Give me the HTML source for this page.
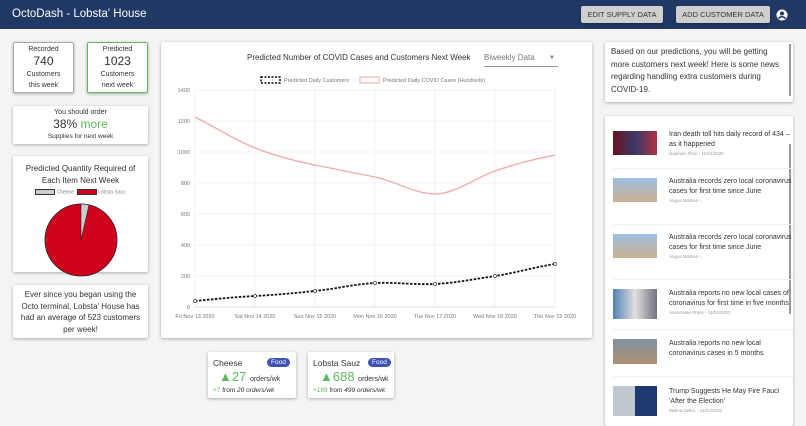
<!DOCTYPE html>
<html><head><meta charset="utf-8"><style>
*{box-sizing:border-box;margin:0;padding:0}
body{width:806px;height:418px;overflow:hidden;background:#f4f4f4;font-family:"Liberation Sans",sans-serif;color:#333;position:relative}
.nav{position:absolute;left:0;top:0;width:806px;height:29px;background:#203864;color:#fff}
.nav .t{position:absolute;left:12px;top:8px;font-size:11.5px}
.btn{position:absolute;top:6px;height:17px;background:#cfcfcf;color:#333;font-size:7.5px;border-radius:2px;text-align:center;line-height:17px;box-shadow:0 1px 2px rgba(0,0,0,.3)}
.card{position:absolute;background:#fff;box-shadow:0 1px 3px rgba(0,0,0,.3);border-radius:2px}
.c{text-align:center}
.sm{font-size:7px}
.news .it{position:absolute;left:8px;width:180px;height:56px;border-top:1px solid #f0f0f0}
.news .im{position:absolute;left:0;width:44px;height:24px}
.news .tx{position:absolute;left:56px;font-size:7px;line-height:9.5px;color:#333;width:126px}
.news .m{font-size:4.5px;color:#999}
.food{font-size:8px}
.pill{position:absolute;background:#3f51b5;color:#fff;border-radius:6px;font-size:6.5px;padding:1px 4px}
</style></head><body>
<div class="nav"><div class="t">OctoDash - Lobsta' House</div>
<div class="btn" style="left:581px;width:82px">EDIT SUPPLY DATA</div>
<div class="btn" style="left:676px;width:94px">ADD CUSTOMER DATA</div>
<svg style="position:absolute;left:776px;top:9px" width="12" height="12" viewBox="0 0 12 12"><circle cx="6" cy="6" r="5.5" fill="#fff"/><circle cx="6" cy="4.5" r="2" fill="#203864"/><path d="M2.5 9.5Q6 6 9.5 9.5" stroke="#203864" stroke-width="1.6" fill="none"/></svg>
</div>

<div class="card c" style="left:13px;top:42px;width:61px;height:51px;border:1px solid #aaa">
<div class="sm" style="margin-top:3px">Recorded</div><div style="font-size:12px;margin-top:1px;line-height:14px">740</div><div class="sm" style="margin-top:1px;line-height:11px">Customers<br>this week</div></div>
<div class="card c" style="left:87px;top:42px;width:61px;height:51px;border:1px solid #5cb85c">
<div class="sm" style="margin-top:3px">Predicted</div><div style="font-size:12px;margin-top:1px;line-height:14px">1023</div><div class="sm" style="margin-top:1px;line-height:11px">Customers<br>next week</div></div>

<div class="card c" style="left:13px;top:106px;width:135px;height:38px">
<div style="font-size:7px;margin-top:3px">You should order</div><div style="font-size:12px;margin-top:1px">38% <span style="color:#5cb85c">more</span></div><div style="font-size:6.5px;margin-top:2px">Supplies for next week</div></div>

<div class="card c" style="left:13px;top:156px;width:135px;height:116px">
<div style="font-size:8px;line-height:12px;margin-top:7px">Predicted Quantity Required of<br>Each Item Next Week</div>
<div style="font-size:5px;color:#888;margin-top:2px"><span style="display:inline-block;width:20px;height:6px;background:#ccc;border:1px solid #333;vertical-align:middle"></span> Cheese &nbsp;<span style="display:inline-block;width:20px;height:6px;background:#d0021b;border:1px solid #333;vertical-align:middle"></span> Lobsta Sauz</div>
<svg style="position:absolute;left:30px;top:46px" width="76" height="76" viewBox="0 0 76 76"><circle cx="38" cy="38" r="36" fill="#d0021b" stroke="#222" stroke-width="0.8"/><path d="M38 38L38 2A36 36 0 0 1 46 3Z" fill="#ccc" stroke="#222" stroke-width="0.6"/></svg>
</div>

<div class="card c" style="left:13px;top:285px;width:135px;height:53px;font-size:8px;line-height:11.5px;padding:4px 6px 0">Ever since you began using the Octo terminal, Lobsta' House has had an average of 523 customers per week!</div>

<div class="card" style="left:161px;top:42px;width:431px;height:296px">
<div style="position:absolute;left:86px;top:11px;font-size:8px">Predicted Number of COVID Cases and Customers Next Week</div>
<div style="position:absolute;left:323px;top:11px;width:74px;height:14px;border-bottom:1px solid #999;font-size:8px;color:#777">Biweekly Data<span style="position:absolute;right:3px;font-size:6px;top:2px">▼</span></div>
</div>
<svg style="position:absolute;left:161px;top:42px" width="431" height="296" viewBox="161 42 431 296" font-family="Liberation Sans" font-size="5.5" fill="#777">
<rect x="261" y="77" width="19" height="6" fill="none" stroke="#000" stroke-dasharray="2 1.5" stroke-width="1.5"/>
<text x="284" y="82">Predicted Daily Customers</text>
<rect x="360" y="77" width="19" height="6" fill="none" stroke="#f0a0a0"/>
<text x="383" y="82">Predicted Daily COVID Cases (Hundreds)</text>
<g stroke="#e8e8e8" stroke-width="0.6">
<line x1="195" y1="90" x2="555" y2="90"/><line x1="195" y1="121" x2="555" y2="121"/><line x1="195" y1="152" x2="555" y2="152"/><line x1="195" y1="183" x2="555" y2="183"/><line x1="195" y1="214" x2="555" y2="214"/><line x1="195" y1="245" x2="555" y2="245"/><line x1="195" y1="276" x2="555" y2="276"/>
<line x1="195" y1="90" x2="195" y2="307"/><line x1="255" y1="90" x2="255" y2="307"/><line x1="315" y1="90" x2="315" y2="307"/><line x1="375" y1="90" x2="375" y2="307"/><line x1="435" y1="90" x2="435" y2="307"/><line x1="495" y1="90" x2="495" y2="307"/><line x1="555" y1="90" x2="555" y2="307"/>
</g>
<line x1="195" y1="307" x2="555" y2="307" stroke="#bbb" stroke-width="0.6"/>
<g text-anchor="end"><text x="190" y="92">1400</text><text x="190" y="123">1200</text><text x="190" y="154">1000</text><text x="190" y="185">800</text><text x="190" y="216">600</text><text x="190" y="247">400</text><text x="190" y="278">200</text><text x="190" y="309">0</text></g>
<g text-anchor="middle"><text x="195" y="318">Fri Nov 13 2020</text><text x="255" y="318">Sat Nov 14 2020</text><text x="315" y="318">Sun Nov 15 2020</text><text x="375" y="318">Mon Nov 16 2020</text><text x="435" y="318">Tue Nov 17 2020</text><text x="495" y="318">Wed Nov 18 2020</text><text x="555" y="318">Thu Nov 19 2020</text></g>
<path d="M195 117C215 127 235 140 255 148S295 161 315 165S355 173 375 177S415 194 435 194S475 178 495 171S535 159 555 155" fill="none" stroke="#f0a8a8" stroke-width="1.3"/>
<path d="M195 301C215 299 235 297 255 296S295 293 315 291S355 284 375 283S415 285 435 284S475 279 495 276S535 267 555 264" fill="none" stroke="#111" stroke-width="1.8" stroke-dasharray="2.5 1.5"/>
<g fill="#fff" stroke="#333" stroke-width="0.7"><circle cx="195" cy="301" r="1.5"/><circle cx="255" cy="296" r="1.5"/><circle cx="315" cy="291" r="1.5"/><circle cx="375" cy="283" r="1.5"/><circle cx="435" cy="284" r="1.5"/><circle cx="495" cy="276" r="1.5"/><circle cx="555" cy="264" r="1.5"/></g>
</svg>

<div class="card food" style="left:208px;top:352px;width:88px;height:46px">
<div style="position:absolute;left:5px;top:6px;font-size:8.5px">Cheese</div><div class="pill" style="left:59px;top:6px">Food</div>
<div style="position:absolute;left:11px;top:17px;color:#5cb85c;font-size:13px">▲27 <span style="font-size:7px;color:#333">orders/wk</span></div>
<div style="position:absolute;left:5px;top:35px;font-size:6.5px"><span style="color:#5cb85c">+7</span> from <i>20 orders/wk</i></div></div>
<div class="card food" style="left:308px;top:352px;width:86px;height:46px">
<div style="position:absolute;left:5px;top:6px;font-size:8.5px">Lobsta Sauz</div><div class="pill" style="left:60px;top:6px">Food</div>
<div style="position:absolute;left:12px;top:17px;color:#5cb85c;font-size:13px">▲688 <span style="font-size:7px;color:#333">orders/wk</span></div>
<div style="position:absolute;left:5px;top:35px;font-size:6.5px"><span style="color:#5cb85c">+189</span> from <i>499 orders/wk</i></div></div>

<div class="card" style="left:605px;top:42px;width:188px;height:60px;font-size:8px;line-height:12.5px;padding:4px 10px 0 6px">Based on our predictions, you will be getting more customers next week! Here is some news regarding handling extra customers during COVID-19.
<div style="position:absolute;right:2px;top:2px;width:2px;height:52px;background:#999"></div></div>

<div class="card news" style="left:605px;top:116px;width:188px;height:310px;overflow:hidden">
<div style="position:absolute;right:2px;top:28px;width:2px;height:170px;background:#999"></div>
<div class="it" style="top:6px;border:0"><div class="im" style="top:9px;background:linear-gradient(90deg,#6a1020,#3a3a6a,#b03040)"></div><div class="tx" style="top:8px">Iran death toll hits daily record of 434 – as it happened<div class="m">Naaman Zhou - 11/01/2020</div></div></div>
<div class="it" style="top:52px"><div class="im" style="top:9px;background:linear-gradient(180deg,#9ec0e0,#c8b090)"></div><div class="tx" style="top:8px">Australia records zero local coronavirus cases for first time since June<div class="m">Angus Watson -</div></div></div>
<div class="it" style="top:108px"><div class="im" style="top:9px;background:linear-gradient(180deg,#9ec0e0,#c8b090)"></div><div class="tx" style="top:8px">Australia records zero local coronavirus cases for first time since June<div class="m">Angus Watson -</div></div></div>
<div class="it" style="top:163px"><div class="im" style="top:9px;height:30px;background:linear-gradient(90deg,#5080b0,#e0e0e0,#707080)"></div><div class="tx" style="top:9px">Australia reports no new local cases of coronavirus for first time in five months<div class="m">Associated Press - 11/01/2020</div></div></div>
<div class="it" style="top:213px"><div class="im" style="top:9px;height:25px;background:linear-gradient(180deg,#8090a0,#b09070)"></div><div class="tx" style="top:9px">Australia reports no new local coronavirus cases in 5 months<div class="m">-</div></div></div>
<div class="it" style="top:260px"><div class="im" style="top:9px;height:30px;background:linear-gradient(90deg,#c0c8d0 50%,#203870 50%)"></div><div class="tx" style="top:10px">Trump Suggests He May Fire Fauci 'After the Election'<div class="m">Melina Delkic - 11/01/2020</div></div></div>
</div>
</body></html>
